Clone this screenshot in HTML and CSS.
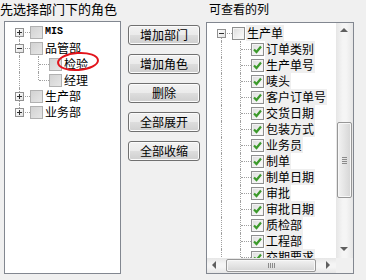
FILE: index.html
```html
<!DOCTYPE html>
<html lang="zh-CN">
<head>
    <meta charset="UTF-8">
    <title>角色列权限</title>
    <link rel="stylesheet" href="styles.css">
</head>
<body>
    <div class="dialog">
        <!-- Roles tree -->
        <div class="col col-roles">
            <div class="caption caption-roles">先选择部门下的角色</div>
            <div class="tree-box">
                <ul class="tree">
                    <li class="row"><span class="ln first"><i class="exp plus"></i></span><span class="chk grey"></span><span class="label mono">MIS</span></li>
                    <li class="row"><span class="ln tee"><i class="exp minus"></i></span><span class="chk grey"></span><span class="label">品管部</span></li>
                    <li class="row"><span class="ln pipe"></span><span class="ln tee"></span><span class="chk grey"></span><span class="label marked">检验<span class="ring"></span></span></li>
                    <li class="row"><span class="ln pipe"></span><span class="ln elbow"></span><span class="chk grey"></span><span class="label">经理</span></li>
                    <li class="row"><span class="ln tee"><i class="exp plus"></i></span><span class="chk grey"></span><span class="label">生产部</span></li>
                    <li class="row"><span class="ln elbow"><i class="exp plus"></i></span><span class="chk grey"></span><span class="label">业务部</span></li>
                </ul>
            </div>
        </div>

        <!-- Actions -->
        <div class="buttons">
            <button class="btn">增加部门</button>
            <button class="btn">增加角色</button>
            <button class="btn">删除</button>
            <button class="btn">全部展开</button>
            <button class="btn">全部收缩</button>
        </div>

        <!-- Visible columns tree -->
        <div class="col col-columns">
            <div class="caption caption-columns">可查看的列</div>
            <div class="list-box">
                <div class="list-view">
                    <ul class="tree" id="columnTree">
                        <li class="row"><span class="ln first"><i class="exp minus"></i></span><span class="chk"></span><span class="label shaded">生产单</span></li>
                    </ul>
                </div>
                <div class="vscroll">
                    <span class="arrow up"></span>
                    <div class="track">
                        <div class="thumb"><span class="grip"></span></div>
                    </div>
                    <span class="arrow down"></span>
                </div>
                <div class="hscroll">
                    <span class="arrow left"></span>
                    <div class="track">
                        <div class="thumb"><span class="grip"></span></div>
                    </div>
                    <span class="arrow right"></span>
                </div>
                <div class="corner"></div>
            </div>
        </div>
    </div>

    <script>
        // Fill the column tree
        const columns = ['订单类别', '生产单号', '唛头', '客户订单号', '交货日期', '包装方式', '业务员',
            '制单', '制单日期', '审批', '审批日期', '质检部', '工程部', '交期要求'];
        const tick = '<svg viewBox="0 0 11 11" width="11" height="11"><path d="M2 5.5 L4.5 8 L9 2.5" fill="none" stroke="#3d9a2c" stroke-width="2.2"/></svg>';
        const tree = document.getElementById('columnTree');
        columns.forEach(name => {
            const li = document.createElement('li');
            li.className = 'row';
            li.innerHTML = '<span class="ln pipe"></span><span class="ln tee"></span>'
                + '<span class="chk on">' + tick + '</span><span class="label shaded">' + name + '</span>';
            tree.appendChild(li);
        });
    </script>
</body>
</html>
```

FILE: styles.css
```css
* {
    margin: 0;
    padding: 0;
    box-sizing: border-box;
}

body {
    width: 366px;
    height: 280px;
    overflow: hidden;
    background: #f0f0f0;
    font-family: "Noto Sans CJK SC", "Noto Sans", sans-serif;
    font-size: 12px;
    color: #000;
}

.dialog {
    display: flex;
    align-items: flex-start;
}

.caption {
    line-height: 17px;
    white-space: nowrap;
}

.caption-roles {
    height: 21px;
    font-size: 13px;
}

.caption-columns {
    height: 22px;
    padding-left: 3px;
}

/* Left tree */
.col-roles {
    width: 121px;
}

.tree-box {
    margin-left: 4px;
    width: 117px;
    height: 253px;
    background: #fff;
    border: 1px solid #828790;
    overflow: hidden;
}

.tree {
    list-style: none;
    padding: 2px 0 0 5px;
}

.row {
    display: flex;
    align-items: center;
    height: 16px;
    white-space: nowrap;
}

.ln {
    position: relative;
    flex: none;
    width: 19px;
    height: 16px;
}

.ln::before,
.ln::after {
    content: "";
    position: absolute;
}

.ln.pipe::before,
.ln.tee::before {
    left: 9px;
    top: 0;
    bottom: 0;
    border-left: 1px dotted #a0a0a0;
}

.ln.elbow::before {
    left: 9px;
    top: 0;
    height: 8px;
    border-left: 1px dotted #a0a0a0;
}

.ln.first::before {
    left: 9px;
    top: 8px;
    bottom: 0;
    border-left: 1px dotted #a0a0a0;
}

.ln.tee::after,
.ln.elbow::after,
.ln.first::after {
    left: 10px;
    top: 8px;
    width: 10px;
    border-top: 1px dotted #a0a0a0;
}

.exp {
    position: absolute;
    z-index: 1;
    left: 5px;
    top: 4px;
    width: 9px;
    height: 9px;
    border: 1px solid #919191;
    background: linear-gradient(135deg, #ffffff, #e2e2e2);
}

.exp::before,
.exp::after {
    content: "";
    position: absolute;
    background: #2f2f2f;
}

.exp::before {
    left: 1px;
    top: 3px;
    width: 5px;
    height: 1px;
}

.exp.plus::after {
    left: 3px;
    top: 1px;
    width: 1px;
    height: 5px;
}

.chk {
    flex: none;
    display: flex;
    align-items: center;
    justify-content: center;
    width: 13px;
    height: 13px;
    margin-left: 1px;
    border: 1px solid #8e8f8f;
    background: linear-gradient(135deg, #dcdcdc, #ffffff);
    box-shadow: inset 0 0 0 1px #f4f4f4;
}

.chk.grey {
    border-color: #b1b1b1;
    background: linear-gradient(135deg, #d2d2d2, #e6e6e6);
    box-shadow: none;
}

.label {
    position: relative;
    margin-left: 1px;
    padding: 0 1px;
    line-height: 16px;
    height: 16px;
}

.label.mono {
    font-family: "Liberation Mono", monospace;
    font-size: 10px;
    font-weight: bold;
}

.label.shaded {
    background: #efefef;
}

/* hand-drawn red mark */
.ring {
    position: absolute;
    left: -6px;
    top: -4px;
    width: 42px;
    height: 19px;
    border: 2.5px solid #e2141c;
    border-radius: 50%;
    transform: rotate(-4deg);
}

/* Buttons */
.buttons {
    display: flex;
    flex-direction: column;
    gap: 9px;
    margin-left: 7px;
    padding-top: 25px;
}

.btn {
    width: 72px;
    height: 20px;
    border: 1px solid #707070;
    border-radius: 3px;
    background: linear-gradient(#f2f2f2 0%, #ebebeb 48%, #dddddd 52%, #cfcfcf 100%);
    box-shadow: inset 0 0 0 1px #fbfbfb;
    font-family: "Noto Sans CJK SC", sans-serif;
    font-size: 12px;
    line-height: 16px;
    color: #000;
}

/* Right list */
.col-columns {
    margin-left: 6px;
}

.list-box {
    display: grid;
    grid-template-columns: 1fr 17px;
    grid-template-rows: 1fr 15px;
    width: 148px;
    height: 252px;
    background: #fff;
    border: 1px solid #828790;
}

.list-view {
    overflow: hidden;
}

.vscroll {
    display: flex;
    flex-direction: column;
    background: linear-gradient(90deg, #e6e6e6, #f5f5f5 40%, #f5f5f5 60%, #e6e6e6);
}

.hscroll {
    display: flex;
    background: linear-gradient(#e6e6e6, #f5f5f5 40%, #f5f5f5 60%, #e6e6e6);
}

.corner {
    background: #f0f0f0;
}

.arrow {
    flex: none;
    position: relative;
    width: 17px;
    height: 17px;
}

.hscroll .arrow {
    height: 15px;
}

.arrow::before {
    content: "";
    position: absolute;
    border: 4px solid transparent;
}

.arrow.up::before {
    left: 4px;
    top: 5px;
    border-bottom-color: #5f5f5f;
    border-top-width: 0;
}

.arrow.down::before {
    left: 4px;
    top: 6px;
    border-top-color: #5f5f5f;
    border-bottom-width: 0;
}

.arrow.left::before {
    left: 5px;
    top: 3px;
    border-right-color: #5f5f5f;
    border-left-width: 0;
}

.arrow.right::before {
    left: 7px;
    top: 3px;
    border-left-color: #5f5f5f;
    border-right-width: 0;
}

.track {
    flex: 1;
    position: relative;
}

.vscroll .thumb {
    margin: 82px 1px 0;
    height: 76px;
}

.hscroll .thumb {
    margin: 1px 0 0 2px;
    width: 90px;
    height: 13px;
}

.thumb {
    display: flex;
    align-items: center;
    justify-content: center;
    border: 1px solid #979797;
    border-radius: 2px;
    box-shadow: inset 0 0 0 1px #f7f7f7;
}

.vscroll .thumb {
    background: linear-gradient(90deg, #f2f2f2, #e4e4e4 50%, #d5d5d5);
}

.hscroll .thumb {
    background: linear-gradient(#f2f2f2, #e4e4e4 50%, #d5d5d5);
}

.vscroll .grip {
    width: 5px;
    height: 7px;
    background: repeating-linear-gradient(#8a8a8a 0 1px, transparent 1px 2px);
}

.hscroll .grip {
    width: 7px;
    height: 5px;
    background: repeating-linear-gradient(90deg, #8a8a8a 0 1px, transparent 1px 2px);
}
```
